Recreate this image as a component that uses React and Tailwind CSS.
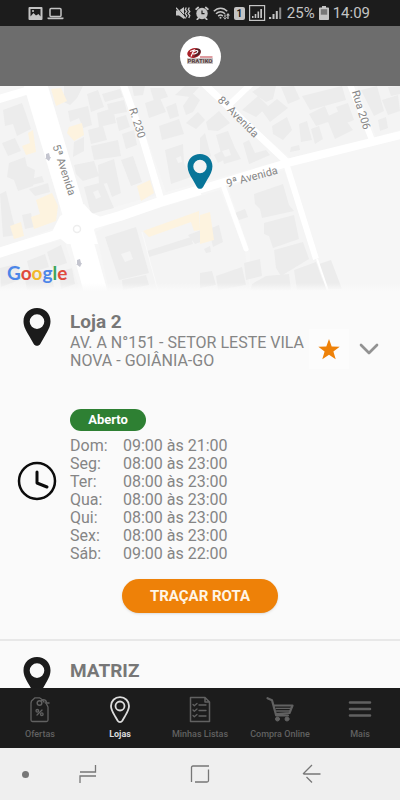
import React from 'react'
import { FiChevronDown } from 'react-icons/fi'

const hours = [
  { day: 'Dom', time: '09:00 às 21:00' },
  { day: 'Seg', time: '08:00 às 23:00' },
  { day: 'Ter', time: '08:00 às 23:00' },
  { day: 'Qua', time: '08:00 às 23:00' },
  { day: 'Qui', time: '08:00 às 23:00' },
  { day: 'Sex', time: '08:00 às 23:00' },
  { day: 'Sáb', time: '09:00 às 22:00' },
]

const PinIcon = ({ className }) => (
  <svg viewBox="0 0 28 38" className={className} aria-hidden="true">
    <path
      fill="currentColor"
      fillRule="evenodd"
      d="M14 0C6.2 0 .5 5.8.5 13.3c0 5.400 2.600 9.500 5.400 14.200l4.700 8.200c1.600 2.800 5.200 2.800 6.800 0l4.700-8.200c2.800-4.700 5.400-8.800 5.400-14.200C27.500 5.800 21.800 0 14 0Zm0 6.300a7.300 7.300 0 1 1 0 14.600 7.300 7.300 0 0 1 0-14.600Z"
    />
  </svg>
)

const StatusBar = () => (
  <div className="flex h-[26px] shrink-0 items-center justify-between bg-[#1c1c1c] pr-[30px] pl-7 text-[#c4c4c4]">
    <div className="flex items-center gap-1">
      <svg viewBox="0 0 15 13" className="h-[13px] w-[15px]" aria-hidden="true">
        <path fill="currentColor" fillRule="evenodd" d="M1.500 0h12a1 1 0 0 1 1 1v11a1 1 0 0 1-1 1h-12a1 1 0 0 1-1-1V1a1 1 0 0 1 1-1ZM2.500 2v7.500l3-3.500 2.500 2.500 2.500-1.500 2 2.500V2Z" />
        <circle cx="5" cy="4" r="1" fill="currentColor" />
      </svg>
      <svg viewBox="0 0 17 13" className="h-[13px] w-[17px]" aria-hidden="true">
        <rect x="3" y="1.500" width="11" height="8" rx="1" fill="none" stroke="currentColor" strokeWidth="1.500" />
        <path fill="currentColor" d="M.5 10.500h16v1a.8.8 0 0 1-.8.800H1.300a.8.8 0 0 1-.8-.8Z" />
      </svg>
    </div>
    <div className="flex items-center gap-1">
      <svg viewBox="0 0 15 14" className="h-3.5 w-[15px]" fill="none" stroke="currentColor" aria-hidden="true">
        <path fill="currentColor" stroke="none" d="M0 4.500h3L8 1v12L3 9.500H0Z" />
        <path strokeWidth="1.300" d="m10.300 1.500-1 2 1.500 2-1.500 2 1.500 2-1 2.500M13.300 1.500l-1 2 1.500 2-1.500 2 1.500 2-1 2.500" />
        <path stroke="#1c1c1c" strokeWidth="1" d="m1 1.500 9.500 10.500" />
        <path strokeWidth="1.300" d="m0 1.800 9.500 10.700" />
      </svg>
      <svg viewBox="0 0 14 14" className="size-3.5" aria-hidden="true">
        <circle cx="7" cy="7.500" r="5.700" fill="currentColor" />
        <path stroke="currentColor" strokeWidth="1.800" strokeLinecap="round" d="m1.200 3.200 2-1.700M12.800 3.200l-2-1.700M3.500 12 2.300 13.300M10.500 12l1.200 1.300" />
        <path fill="none" stroke="#1c1c1c" strokeWidth="1.200" d="M7 4.500v3.200h2.500" />
      </svg>
      <svg viewBox="0 0 17 14" className="h-3.5 w-[17px]" fill="none" stroke="currentColor" strokeWidth="1.500" aria-hidden="true">
        <path d="M.8 5.300c4-4.200 9.600-4.200 13.400 0M3 7.800c2.800-2.900 6.200-2.900 9 0M5.200 10.100c1.600-1.500 3-1.500 4.600 0" />
        <circle cx="7.500" cy="11.800" r="1" fill="currentColor" stroke="none" />
        <path fill="currentColor" stroke="none" d="m10 11 2 2.800 2-2.800Zm3-1.500L15 7l2 2.500ZM14.300 9h1.300v4h-1.300ZM11.400 8.500h1.200V12h-1.200Z" />
      </svg>
      <span className="flex h-[13px] w-[11px] items-center justify-center rounded-xs bg-[#c4c4c4] text-[10px] font-bold text-[#1c1c1c]">1</span>
      <svg viewBox="0 0 34 16" className="h-4 w-[34px]" aria-hidden="true">
        <rect x=".6" y=".6" width="15" height="14.800" fill="none" stroke="currentColor" strokeWidth="1.200" />
        <path fill="currentColor" d="M3 11h1.500v2H3ZM5.700 9h1.600v4H5.700ZM8.500 6.500h1.600V13H8.500ZM11.300 4H13v9h-1.700ZM20 12h2.200v2H20ZM23.500 9h2v5h-2ZM26.800 6h2v8h-2Z" />
        <path fill="currentColor" opacity=".65" d="M30.200 2.500h2V14h-2Z" />
      </svg>
      <span className="text-[15px]">25%</span>
      <svg viewBox="0 0 10 14" className="h-3.5 w-2.5" aria-hidden="true">
        <path fill="currentColor" d="M3 0h4v1.500h2c.6 0 1 .4 1 1V13c0 .6-.4 1-1 1H1c-.6 0-1-.4-1-1V2.500c0-.6.4-1 1-1h2Z" />
        <path fill="#777" d="M1.800 3.200h6.400v5.500H1.800Z" />
      </svg>
      <span className="text-[15px]">14:09</span>
    </div>
  </div>
)

const Header = () => (
  <header className="flex h-[60px] shrink-0 items-center justify-center bg-[#6d6d6d]">
    <div className="flex size-[41px] items-center justify-center rounded-full bg-white">
      <svg viewBox="0 0 28 18" className="h-[18px] w-7" role="img" aria-label="Pratiko">
        <ellipse cx="8" cy="6" rx="6.800" ry="4.800" fill="#a82028" transform="rotate(-12 8 6)" />
        <path d="M10 1.500c4-.5 5.500 1.500 4.500 4-1 2.500-4 4-6.500 4.500l2-4Z" fill="#512026" />
        <path d="m4 4.500 4-1.500-3 6.500M8 4.500c3-2 5-.5 3 1.200C9.800 6.600 8 7 7 7" fill="none" stroke="#fff" strokeWidth="1.200" />
        <path d="M14 10h12.500" stroke="#bd3941" strokeWidth="1" />
        <rect x="1" y="11" width="26" height="6" fill="#ccc6c5" />
        <text x="14" y="16.400" textAnchor="middle" fontSize="6" fontWeight="900" fill="#5b4545">PRATIKO</text>
      </svg>
    </div>
  </header>
)

const StoreMap = () => (
  <section className="relative h-[205px] shrink-0 overflow-hidden bg-[#f6f6f6]" aria-label="Mapa">
    <svg viewBox="0 0 400 205" preserveAspectRatio="xMidYMid slice" className="block size-full">
      {/* ground */}
      <path fill="#f4f4f4" d="M0 17 28 9 60 122 60 140 0 162ZM48 0H123L157 109 90 128 82 118ZM128 0H204L284 74 166 106ZM254 0H348L370 52 290 72 229 20ZM357 0H400V44L376 51ZM96 146 112 136 220 104 245 165 250 205H109ZM228 101 284 84 317 173 327 205H250V166ZM0 171 64 153 80 205H0Z" />
      {/* buildings */}
      <g fill="#ececec">
        <path d="M3 24 22 17 26 28 31 43 17 50 13 38 5 40ZM2 57 15 52 21 65 8 70ZM9 77 25 71 27 80 35 84 33 100 18 105 14 94 7 91ZM27 94 42 90 44 96 28 100ZM29 103 48 97 50 106 35 110ZM0 108 6 105 13 134 17 149 3 151ZM22 129 31 127 34 141 25 143Z" />
        <path d="M64 0H83L77 12 70 19 64 16ZM87 8 98 4 104 21 91 26ZM68 25 88 20 92 39 83 42 79 32 70 36ZM97 27 113 22 116 37 99 41ZM102 8 120 3 123 11 105 16ZM107 18 124 14 127 26 110 29ZM74 56 84 51 84 65 73 71ZM88 44 103 40 107 54 91 58ZM91 60 118 54 121 70 94 74ZM74 79 94 75 99 90 83 95 76 88ZM98 79 114 73 121 107 112 111 107 97 99 99ZM84 101 103 96 110 113 114 122 91 128ZM121 74 133 70 142 96 131 100ZM122 48 134 44 137 59 126 63ZM116 32 126 29 130 41 119 45Z" />
        <path d="M132 0H145L143 9 134 10ZM145 17 160 12 166 26 149 32ZM150 2H164L168 11 154 15ZM166 21 176 17 179 30 170 33ZM159 40 179 33 184 48 162 54ZM165 64 183 58 184 77 191 91 171 98ZM183 20 192 7 200 14 193 26 186 29ZM175 9 185 0 199 1 190 11ZM186 37 198 26 205 34 196 43Z" />
        <path d="M206 36 219 25 230 37 218 45 208 44ZM200 52 205 47 211 70 205 75 200 72ZM216 49 228 45 235 62 241 73 224 78ZM243 57 249 54 255 67 266 64 270 69 254 76 249 78ZM214 69 231 60 235 68 218 77Z" />
        <path d="M242 24 258 10 268 20 256 31ZM252 6 261 0H276L273 13 266 16ZM262 25 277 13 288 22 270 36ZM272 40 287 31 292 44 283 54 273 48ZM281 1 294 0 300 13 288 18ZM302 10 342 0 346 14 310 24ZM309 28 325 20 331 35 316 40ZM299 38 307 35 312 54 301 56ZM311 43 319 40 323 53 315 58ZM326 31 339 25 353 44 335 53ZM336 21 348 17 354 34 344 38ZM291 61 299 59 300 64 290 66Z" />
        <path d="M361 4 377 0 384 25 374 30ZM382 14 398 9 400 25 388 29ZM388 1 400 0V8L391 10ZM378 34 386 31 388 42 380 45Z" />
        <path d="M105 151 136 141 149 187 119 194ZM122 194 146 189 149 199 123 204ZM147 165 191 151 193 158 149 171ZM188 149 204 143 206 154 195 158ZM209 143 219 139 223 156 213 161ZM204 163 210 160 211 166 206 167ZM235 127 245 123 248 131 239 134ZM47 166 61 159 67 177 52 182ZM27 175 45 168 49 181 30 187ZM0 182 16 178 22 193 1 201ZM25 192 50 183 54 201 29 205H27ZM59 186 72 182 75 198 61 203Z" />
        <path d="M254 108 283 98 289 119 294 125 262 132 260 123 255 118ZM264 137 294 129 299 153 273 162 269 150 264 148ZM274 164 303 156 309 173 281 190 276 182ZM244 177 260 173 262 190 246 194ZM216 190 242 181 246 199 218 204ZM200 187 212 185 216 199 200 202ZM266 190 289 188 291 205H250L252 198ZM294 184 316 176 326 204H297ZM319 178 331 174 342 203H325Z" />
      </g>
      <path fill="#f4f4f4" d="M121 168 130 165 133 173 125 176ZM93 106 98 104 101 111 96 113ZM176 72 181 70 182 76 178 77ZM222 65 229 63 231 69 225 71Z" />
      <g fill="#fdf3df">
        <path d="M51 3 61 2 67 15 56 20ZM69 41 82 37 84 49 74 55 67 47ZM28 47 33 44 36 66 26 69 22 60 30 57ZM36 114 52 107 58 120 56 135 34 143 31 131 40 128ZM10 140 21 136 24 150 14 153ZM137 100 150 94 154 107 141 115ZM143 145 199 125 200 144 194 145 191 136 149 151ZM200 129 210 126 214 154 200 158Z" />
      </g>
      {/* roads */}
      <g fill="none" stroke="#fff" strokeLinejoin="round">
        <path strokeWidth="23" d="M34-6 71 117 98 214" />
        <path strokeWidth="10" d="M-5 168 72 144 120 130 160 116 200 104" />
        <path strokeWidth="8" d="M198 104 287 77 405 48M-4 14 29 4" />
        <path strokeWidth="7" d="M122-5 143 54 161 114M201-5 287 76" />
        <path strokeWidth="6" d="M252-3 228 20M349-4 372 54M286 77 316 173" />
        <path strokeWidth="5" strokeLinecap="round" d="M224 102 246 163" />
        <path strokeWidth="2" d="M317 173 328 205" />
      </g>
      <path fill="none" stroke="#f9f9f9" strokeWidth="1" d="M142 146 158 205" />
      <path fill="#fff" d="M52 146 60 130 84 118 92 127 101 131 94 144 98 158 67 158Z" />
      <circle cx="77" cy="143" r="3.500" fill="none" stroke="#eeeeee" strokeWidth="1.500" />
      <path d="M46 68v4h-1l4 3 2-4h-1l-1-4ZM77 174v4h-1l4 3 2-4h-1l-1-4Z" fill="#c4c5cf" />
      {/* street names */}
      <g fill="#858585" fontSize="11" textAnchor="middle" dominantBaseline="central">
        <text transform="translate(64 84) rotate(72)">5ª Avenida</text>
        <text transform="translate(137 37) rotate(72)">R. 230</text>
        <text transform="translate(238 31) rotate(45)">8ª Avenida</text>
        <text transform="translate(252 91) rotate(-15)">9ª Avenida</text>
        <text transform="translate(361 24) rotate(73)">Rua 206</text>
      </g>
    </svg>
    <div className="absolute inset-x-0 bottom-0 h-2 bg-linear-to-b from-transparent to-[#fafafa]" />
    <PinIcon className="absolute top-[68px] left-1/2 h-[35px] w-[26px] -translate-x-1/2 text-[#087599]" />
    <span className="absolute bottom-1.5 left-[7px] font-['Lato'] text-[19px] leading-6 font-bold">
      <span className="text-[#4c86e8]">G</span>
      <span className="text-[#df4b3d]">o</span>
      <span className="text-[#f1b82d]">o</span>
      <span className="text-[#4c86e8]">g</span>
      <span className="text-[#3ca65b]">l</span>
      <span className="text-[#df4b3d]">e</span>
    </span>
  </section>
)

const StoreCard = () => (
  <article className="border-b-2 border-[#e8e8e8] pb-[26px]">
    <div className="flex pt-[17px]">
      <div className="flex w-[70px] shrink-0 justify-center pl-1">
        <PinIcon className="h-[38px] w-7 text-[#1b1b1b]" />
      </div>
      <div className="min-w-0 flex-1 pt-0.5">
        <h2 className="text-[19px] leading-6 font-bold text-[#777]">Loja 2</h2>
        <p className="text-base leading-[18px] text-[#858585]">AV. A N°151 - SETOR LESTE VILA NOVA - GOIÂNIA-GO</p>
      </div>
      <div className="flex shrink-0 items-center gap-1 pt-5 pr-[15px]">
        <button className="flex size-10 items-center justify-center bg-[#fcfcfc]" title="Favorita">
          <svg viewBox="0 0 22 21" className="h-[21px] w-[22px]" aria-hidden="true">
            <path fill="#ee8108" d="m11 0 2.700 7.500 8 .2-6.300 4.900 2.300 7.700L11 15.800l-6.700 4.500 2.300-7.700L.3 7.700l8-.2Z" />
          </svg>
        </button>
        <button className="flex h-10 w-8 items-center justify-center text-[#929292]" title="Recolher">
          <FiChevronDown size={32} strokeWidth={2} className="shrink-0" />
        </button>
      </div>
    </div>

    <div className="flex items-center pt-[39px]">
      <div className="flex w-[70px] shrink-0 justify-center pb-2.5 pl-1">
        <svg viewBox="0 0 40 40" className="size-10" fill="none" stroke="#0c0c0c" strokeLinecap="round" strokeLinejoin="round" aria-hidden="true">
          <circle cx="20" cy="20" r="18" strokeWidth="2.500" />
          <path strokeWidth="3" d="M20 11v11l10 4" />
        </svg>
      </div>
      <div>
        <span className="flex h-[22px] w-[76px] items-center justify-center rounded-full bg-[#2e8033] text-[13px] font-bold text-white">
          Aberto
        </span>
        <table className="mt-1.5 text-left text-base leading-[18px] text-[#858585]">
          <tbody>
            {hours.map(({ day, time }) => (
              <tr key={day}>
                <th scope="row" className="w-[53px] p-0 font-normal">{day}:</th>
                <td className="p-0">{time}</td>
              </tr>
            ))}
          </tbody>
        </table>
      </div>
    </div>

    <div className="flex justify-center pt-4">
      <button className="h-[34px] rounded-full bg-[#ee8108] px-7 text-[15px] font-bold text-[#fff5e6] shadow">
        TRAÇAR ROTA
      </button>
    </div>
  </article>
)

const tabs = [
  {
    label: 'Ofertas',
    icon: (
      <>
        <path strokeWidth="1.300" d="M18 6 16 3.500 13.500 1.800H9L5.500 5 5 7v17a1.500 1.500 0 0 0 1.500 1.500h14A1.500 1.500 0 0 0 22 24V11l-1.500-3" />
        <circle cx="13.500" cy="7" r="2.300" strokeWidth="1.500" />
        <path strokeWidth="1.500" d="M15.500 4.500C18 3 21 4 20 7M19.500 7h3.500" />
        <path strokeWidth="1.300" d="m16 14-5 5" />
        <circle cx="11.300" cy="14.800" r="1.300" strokeWidth="1.300" />
        <circle cx="15.800" cy="18.200" r="1.300" strokeWidth="1.300" />
      </>
    ),
  },
  {
    label: 'Lojas',
    active: true,
    icon: (
      <>
        <path strokeWidth="1.800" d="M14 1.200c-5.200 0-9 3.900-9 8.800 0 4 2.500 7.500 4.500 11l2.200 3.800c1.100 1.700 3.500 1.700 4.600 0l2.200-3.800c2-3.500 4.500-7 4.500-11 0-4.900-3.800-8.800-9-8.800Z" />
        <circle cx="14" cy="10" r="4.500" strokeWidth="1.800" />
      </>
    ),
  },
  {
    label: 'Minhas Listas',
    icon: (
      <>
        <path strokeWidth="1.500" d="M4.500 1.500h14.500l4.500 4.500v19.500h-19ZM19 1.500V6h4.500" />
        <path strokeWidth="1.300" d="m7 8.500 1.300 1.300L11 7.500M13 9h7M7 14l1.300 1.300L11 13M13 14.500h7M7 19.500l1.300 1.300 2.700-2.300M13 20h7" />
      </>
    ),
  },
  {
    label: 'Compra Online',
    icon: (
      <>
        <path strokeWidth="2.200" d="M1.500 2.200 6 4.200 10.200 19.500H22M8 9.500h18.500L23.500 17 10 18" />
        <path strokeWidth="1.300" d="M10 12.300h15M10.500 15h13.500" />
        <circle cx="11.500" cy="23" r="2" fill="currentColor" strokeWidth="1" />
        <circle cx="21" cy="23" r="2" fill="currentColor" strokeWidth="1" />
      </>
    ),
  },
  {
    label: 'Mais',
    icon: <path strokeWidth="2.600" d="M4 6.500h20M4 13h20M4 19.500h20" />,
  },
]

const TabBar = () => (
  <nav className="grid h-[60px] shrink-0 grid-cols-5 bg-[#1c1c1c]">
    {tabs.map(({ label, icon, active }) => (
      <a
        key={label}
        href="#"
        className={`flex flex-col items-center pt-2 ${active ? 'text-[#dddddd]' : 'text-[#616161]'}`}
      >
        <svg viewBox="0 0 28 27" className="h-[27px] w-7" fill="none" stroke="currentColor" strokeLinecap="round" strokeLinejoin="round" aria-hidden="true">
          {icon}
        </svg>
        <span className={`mt-[5px] text-[9px] leading-3 whitespace-nowrap ${active ? 'font-bold' : 'font-medium'}`}>{label}</span>
      </a>
    ))}
  </nav>
)

const SystemNav = () => (
  <div className="flex h-[52px] shrink-0 bg-[#efefef] pr-8 text-[#777]">
    <button className="flex w-8 items-center justify-end pr-[3px]" title="Ocultar barra">
      <span className="size-[7px] rounded-full bg-[#777]" />
    </button>
    <button className="flex flex-1 items-center justify-center" title="Recentes">
      <svg viewBox="0 0 20 20" className="size-5" fill="none" stroke="currentColor" strokeWidth="1.300" aria-hidden="true">
        <path d="M2 8h15.500V1M18 12H2v7" />
      </svg>
    </button>
    <button className="flex flex-1 items-center justify-center" title="Início">
      <svg viewBox="0 0 20 20" className="size-5" fill="none" stroke="currentColor" strokeWidth="1.300" aria-hidden="true">
        <path d="M1.500 18V3.500c0-1 .5-1.500 1.500-1.500h16M18.500 5.500v11c0 1-.5 1.500-1.500 1.500H5" />
      </svg>
    </button>
    <button className="flex flex-1 items-center justify-center" title="Voltar">
      <svg viewBox="0 0 20 20" className="size-5" fill="none" stroke="currentColor" strokeWidth="1.300" aria-hidden="true">
        <path d="M10 1 1.500 9.500 2 10h16.500M4.500 13l5.500 5.500" />
      </svg>
    </button>
  </div>
)

const App = () => (
  <div className="flex h-screen flex-col overflow-hidden bg-[#fafafa] font-['Roboto',sans-serif]">
    <StatusBar />
    <Header />
    <StoreMap />
    <main className="min-h-0 flex-1 overflow-y-auto [scrollbar-width:none]">
      <StoreCard />
      <article className="flex pt-4">
        <div className="flex w-[70px] shrink-0 justify-center pl-1">
          <PinIcon className="h-[38px] w-7 text-[#1b1b1b]" />
        </div>
        <h2 className="pt-0.5 text-[19px] leading-6 font-bold text-[#777]">MATRIZ</h2>
      </article>
    </main>
    <TabBar />
    <SystemNav />
  </div>
)

export default App
